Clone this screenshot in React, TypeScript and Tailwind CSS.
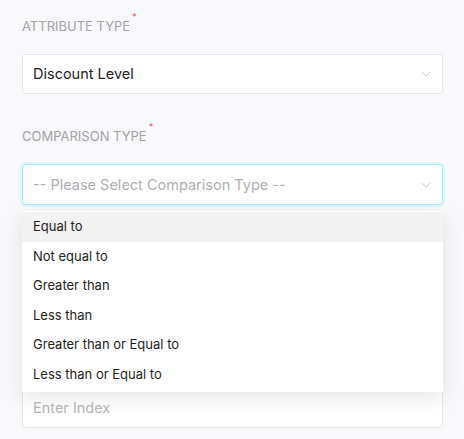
import { ChevronDown } from 'lucide-react'

const OPTIONS = [
  'Equal to',
  'Not equal to',
  'Greater than',
  'Less than',
  'Greater than or Equal to',
  'Less than or Equal to',
]

function Label({ text }: { text: string }) {
  return (
    <div className="mb-[18px] h-[20px] text-[13px] leading-[20px] text-[#a3a3a8] uppercase">
      {text}
      <span className="relative -top-[11px] ml-[2px] text-[9px] text-[#f0505a]">*</span>
    </div>
  )
}

export default function App() {
  return (
    <div
      className="min-h-screen bg-[#f9f9fb] px-[22px] pt-[16px]"
      style={{ fontFamily: 'Inter, "Liberation Sans", sans-serif' }}
    >
      <div className="w-[421px]">
        {/* Attribute type */}
        <Label text="Attribute Type" />
        <div className="flex h-[40px] items-center justify-between rounded-[4px] border border-[#e6e6ea] bg-white pl-[10px] pr-[8px]">
          <span className="text-[14.5px] text-[#222]">Discount Level</span>
          <ChevronDown className="h-[16px] w-[16px] text-[#c4c4c8]" strokeWidth={1.2} />
        </div>

        {/* Comparison type */}
        <div className="mt-[32px]">
          <Label text="Comparison Type" />
        </div>
        <div className="relative">
          <div className="flex h-[41px] items-center justify-between rounded-[4px] border border-[#a8ecf7] bg-white pl-[10px] pr-[8px] shadow-[0_0_0_2px_#dcf6fc]">
            <span className="text-[14.5px] text-[#b0b0b4]">-- Please Select Comparison Type --</span>
            <ChevronDown className="h-[16px] w-[16px] text-[#c4c4c8]" strokeWidth={1.2} />
          </div>

          {/* dropdown menu */}
          <ul className="absolute left-0 right-0 top-[47px] z-10 bg-white pt-[1px] pb-[3px] shadow-[0_6px_20px_rgba(0,0,0,0.10)]">
            {OPTIONS.map((o, i) => (
              <li
                key={o}
                className={`flex h-[29.5px] items-center px-[11px] text-[13px] text-[#1f1f22] ${i === 0 ? 'bg-[#f3f3f4]' : ''}`}
              >
                {o}
              </li>
            ))}
          </ul>
        </div>

        {/* Value (hidden behind the dropdown) */}
        <div className="mt-[31px]">
          <Label text="Value" />
        </div>
        <div className="flex h-[40px] items-center rounded-[4px] border border-[#e6e6ea] bg-white pl-[10px]">
          <span className="text-[14.5px] text-[#b0b0b4]">Enter Value</span>
        </div>

        {/* Index */}
        <div className="mt-[36px]">
          <Label text="Index" />
        </div>
        <div className="flex h-[40px] items-center rounded-[4px] border border-[#e6e6ea] bg-white pl-[10px]">
          <span className="text-[14.5px] text-[#b8b8bc]">Enter Index</span>
        </div>
      </div>
    </div>
  )
}
